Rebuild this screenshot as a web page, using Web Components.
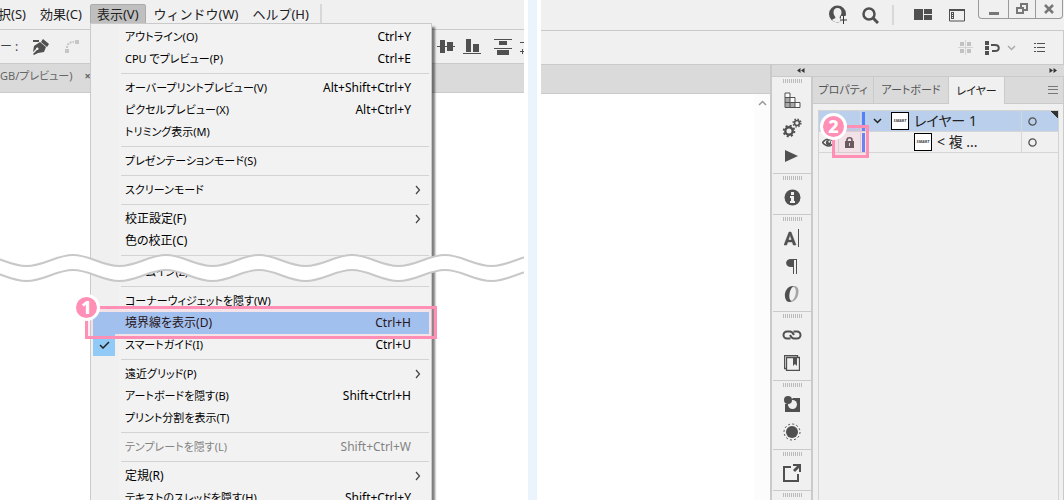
<!DOCTYPE html>
<html lang="ja">
<head>
<meta charset="utf-8">
<meta name="viewport" content="width=device-width, initial-scale=1">
<title>表示メニューとレイヤーパネル</title>
<style>
  body {
    margin: 0;
    background: #fff;
    color: #111;
    font: 12px/22px "Noto Sans", "Noto Sans CJK JP", sans-serif;
    --bar: #f0f0f0;
    --strip: #dadada;
    --line: #cacaca;
    --ink: #505050;
    --pink: #ff8fb5;
    --ui: "Noto Sans", "Noto Sans CJK JP", sans-serif;
  }
</style>
</head>
<body>
<tutorial-figure>
  <menu-pane slot="before"></menu-pane>
  <layer-pane slot="after"></layer-pane>
</tutorial-figure>

<script>
const ICONS = {
  pen: [16, 18, '<path d="M0 2h6v2H0z" fill="#505050"/><path d="M10 1l6 5-2 3-6-5z" fill="#505050"/><path d="M7 4l6 5-2 5-6 1-4 2-1-1 4-4a1.300 1.300 0 1 0-1-1L0 14l1-6z" fill="#505050"/>'],
  curve: [15, 15, '<path d="M0 10h4v4H0zM10 1h4v4h-4z" fill="#c6c6c6"/><path d="M2 9C2 5 5 3 9 3" fill="none" stroke="#c6c6c6" stroke-width="2" stroke-dasharray="2 1"/>'],
  alignMiddle: [18, 16, '<path d="M0 7h18v1H0zM3 1h5v13H3zM10 3h6v9h-6z" fill="#505050"/>'],
  alignBottom: [18, 16, '<path d="M0 14h18v1H0zM3 0h5v13H3zM10 5h6v8h-6z" fill="#505050"/>'],
  distribute: [18, 16, '<path d="M0 0h18v1H0zM5 2h8v4H5zM0 9h18v1H0zM3 11h12v5H3z" fill="#505050"/>'],
  distributeCut: [4, 16, '<path d="M0 3h4v1H0zM0 12h4v1H0zM2 10h1v5H2z" fill="#505050"/>'],
  user: [19, 20, '<circle cx="8.500" cy="9" r="8.500" fill="#505050"/><path d="M8.500 3c2.500 0 4 1.700 4 4.300 0 2-1 3.600-1.800 4.700v1.200c1.200.4 2.600.8 3.300 1.800-3 3-8 3-11 0 .7-1 2.100-1.400 3.300-1.800V12C5.500 10.900 4.500 9.300 4.500 7.300 4.500 4.700 6 3 8.500 3z" fill="#f0f0f0"/><path d="M12 11h7v9h-7z" fill="#f0f0f0"/><path d="M14 11h1v8h-1zM11 14.500h7v1h-7z" fill="#333"/>'],
  search: [17, 17, '<circle cx="7" cy="7" r="5.500" fill="none" stroke="#505050" stroke-width="2.500"/><path d="M11 11l5 5" stroke="#505050" stroke-width="3"/>'],
  workspace: [18, 12, '<path d="M0 0h9v11H0zM10 0h8v5h-8zM10 6h8v5h-8z" fill="#505050"/>'],
  window: [16, 13, '<path d="M1 0.500h14q.5 0 .5.500v11H.5V1q0-.5.500-.5z" fill="none" stroke="#505050"/><path d="M0 0h16v2H0zM2 3h3v7H2z" fill="#505050"/><path d="M3 4h1v1H3zM3 6h1v1H3zM3 8h1v1H3z" fill="#f0f0f0"/>'],
  minimize: [10, 12, '<path d="M0 9h10v3H0z" fill="#777"/>'],
  restore: [12, 12, '<path d="M5 1h6v6H5z" fill="none" stroke="#777" stroke-width="2"/><path d="M1 5h6v5H1z" fill="#f0f0f0" stroke="#777" stroke-width="2"/>'],
  close: [10, 10, '<path d="M1 1l8 8M9 1L1 9" stroke="#777" stroke-width="2.500"/>'],
  pixelGrid: [15, 15, '<path d="M2 2h4v4H2zM9 2h4v4H9zM2 9h4v4H2zM9 9h4v4H9z" fill="#c2c2c2"/><path d="M0 7h15v1H0zM7 0h1v15H7z" fill="#d4d4d4"/>'],
  snap: [15, 14, '<path d="M0 0h4v4H0zM0 5h4v4H0zM0 10h4v4H0z" fill="#505050"/><path d="M6 4h4c5 0 5 6 0 6H7" fill="none" stroke="#505050" stroke-width="2"/><path d="M6 3h2v2H6z" fill="#505050"/>'],
  chevron: [9, 6, '<path d="M1 1l3.500 3.500L8 1" fill="none" stroke="currentColor" stroke-width="1.500"/>'],
  chevronUp: [9, 6, '<path d="M1 5l3.500-3.500L8 5" fill="none" stroke="#999" stroke-width="1.500"/>'],
  chevronRight: [6, 10, '<path d="M1 1l3.500 4L1 9" fill="none" stroke="#444" stroke-width="1.200"/>'],
  list: [11, 9, '<path d="M0 0h2v1H0zM0 4h2v1H0zM0 8h2v1H0zM3 0h8v1H3zM3 4h8v1H3zM3 8h8v1H3z" fill="#505050"/>'],
  menu: [10, 8, '<path d="M0 0h10v1H0zM0 3h10v1H0zM0 7h10v1H0z" fill="#777"/>'],
  collapseLeft: [8, 5, '<path d="M3.500 0v5L0 2.500zM7.500 0v5L4 2.500z" fill="#333"/>'],
  collapseRight: [8, 5, '<path d="M.5 0v5L4 2.500zM4.500 0v5L8 2.500z" fill="#333"/>'],
  check: [11, 8, '<path d="M1 4l3 3 6-6" fill="none" stroke="#222" stroke-width="1.500"/>'],
  swatchSteps: [17, 17, '<path d="M1 5.500h5v5H1zM1 10.500h5v5H1zM6 10.500h5v5H6z" fill="#a8a8a8"/><path d="M1 1h5v4.500H1zM6 5.500h5v5H6zM11 10.500h5v5h-5z" fill="#fafafa"/><path d="M1 1h5v4.500h5v5h5v5H1zM1 5.500h5v10M1 10.500h10v5" fill="none" stroke="#505050"/>'],
  gears: [20, 20, '<circle cx="7" cy="13" r="3.700" fill="none" stroke="#505050" stroke-width="2.400"/><circle cx="7" cy="13" r="5.400" fill="none" stroke="#505050" stroke-width="1.800" stroke-dasharray="2.100 2.140"/><circle cx="15" cy="5" r="2.500" fill="none" stroke="#505050" stroke-width="1.600"/><circle cx="15" cy="5" r="3.900" fill="none" stroke="#505050" stroke-width="1.400" stroke-dasharray="1.500 1.560"/>'],
  play: [14, 14, '<path d="M0 1l13 6-13 6z" fill="#505050"/>'],
  info: [17, 17, '<circle cx="8.500" cy="8.500" r="8" fill="#505050"/><path d="M7 3h3v3H7zM6 7h4v5h1v2H6v-2h1V9H6z" fill="#f0f0f0"/>'],
  character: [16, 18, '<path d="M0 16L5 3h2l5 13H9.300l-1-3H3.700l-1 3zM4.300 11h3.400L6 6z" fill="#505050" stroke="#505050" stroke-width=".5" fill-rule="evenodd"/><path d="M14 0h1v18h-1z" fill="#505050"/>'],
  paragraph: [12, 15, '<path d="M5 0h6v15h-1V1H8v14H7V8H5C-1.500 8-1.500 0 5 0z" fill="#505050"/>'],
  opentype: [16, 18, '<path d="M9 1C2 1-1 10 2 15c1 2 3 2 5 2l1-1c-5 0-2-14 1-14z" fill="#505050"/><path d="M9 1c6-1 6 5 5 9s-4 7-8 7l1-1c5-1 7-14 2-14z" fill="#a4a4a4"/>'],
  link: [20, 10, '<path d="M8.500 8.500H5a3.500 3.500 0 0 1 0-7h3c2 0 3 1.500 4 3.500M11.500 1.500H15a3.500 3.500 0 0 1 0 7h-3c-2 0-3-1.500-4-3.500" fill="none" stroke="#505050" stroke-width="2"/>'],
  library: [16, 16, '<path d="M2.500 13.500h-2V.5h13v2M2.500 2.500h13v13h-13z" fill="none" stroke="#505050" stroke-width="1.300"/><path d="M9 3h4v8l-2-2-2 2z" fill="#505050"/>'],
  appearance: [17, 17, '<path d="M1 8h4V6l4-4h7v14H1z" fill="#505050"/><circle cx="8.500" cy="8.500" r="4.500" fill="#f0f0f0"/><circle cx="4" cy="4" r="4" fill="#505050"/>'],
  graphicStyle: [18, 18, '<circle cx="9" cy="9" r="6" fill="#505050"/><circle cx="9" cy="9" r="8" fill="none" stroke="#505050" stroke-dasharray="2 2.190"/>'],
  export: [18, 18, '<path d="M8 3H1v14h14v-7" fill="none" stroke="#505050" stroke-width="2"/><path d="M10 0h8v8h-2V4l-4 4-2-2 4-4h-4z" fill="#505050"/>'],
  eye: [13, 9, '<path d="M.5 4.500Q6.500-2.500 12.500 4.500 6.500 11.500.5 4.500z" fill="none" stroke="#505050" stroke-width="1.300"/><circle cx="6.500" cy="4.500" r="2.600" fill="#505050"/><circle cx="7.300" cy="3.700" r="1" fill="#eee"/>'],
  lock: [9, 11, '<path d="M0 4h9v7H0z" fill="#505050"/><path d="M2 5V3q0-2.200 2.500-2.200T7 3v2" fill="none" stroke="#505050" stroke-width="1.600"/><path d="M4 6h1v3H4z" fill="#ddd"/>'],
  target: [9, 9, '<circle cx="4.500" cy="4.500" r="3.600" fill="none" stroke="#505050" stroke-width="1.300"/>']
};

const RESET = `
  * { box-sizing: border-box; }
  :host { display: block; box-sizing: border-box; }
  button { margin: 0; padding: 0; border: 0; background: none; font: inherit; color: inherit; text-align: left; }
`;

function define(name, css, html) {
  customElements.define(name, class extends HTMLElement {
    connectedCallback() {
      if (this.shadowRoot) return;
      const root = this.attachShadow({ mode: 'open' });
      const template = document.createElement('template');
      template.innerHTML = `<style>${RESET}${css}</style>${typeof html === 'function' ? html(this) : html}`;
      root.append(template.content.cloneNode(true));
    }
  });
}

define('ui-icon', `
  :host { display: inline-flex; flex: none; }
  svg { display: block; }
`, el => {
  const [w, h, body] = ICONS[el.getAttribute('name')];
  return `<svg width="${w}" height="${h}" viewBox="0 0 ${w} ${h}" aria-hidden="true">${body}</svg>`;
});

define('tutorial-figure', `
  :host { display: grid; grid-template-columns: minmax(0, 524fr) 17px minmax(0, 523fr); height: 100vh; overflow: hidden; }
  .divider { margin: 0 4px; background: #ebf4fd; }
  ::slotted(*) { min-width: 0; }
`, `<slot name="before"></slot><div class="divider"></div><slot name="after"></slot>`);

define('step-mark', `
  :host { position: absolute; z-index: 3; border: 3px solid var(--pink); background: rgba(255, 143, 181, .15); pointer-events: none; }
  span { position: absolute; left: -15px; top: -15px; width: 27px; height: 27px; border: 3px solid #fff; border-radius: 50%;
    background: var(--pink); color: #fff; font: 800 18px/20px "Noto Sans", sans-serif; text-align: center; }
`, `<span><slot></slot></span>`);

/* ---------- left: menu ---------- */

define('menu-row', `
  button { display: grid; grid-template-columns: 22px 1fr auto; width: 100%; height: 22px; align-items: center; white-space: nowrap; }
  .check { display: flex; align-items: center; justify-content: center; height: 22px; }
  :host([checked]) .check { background: #91c9f7; }
  :host([active]) button { background: #91c9f7; }
  :host([disabled]) button { color: #838383; }
  .label { padding-left: 10px; font-feature-settings: "palt"; }
  :host([kana]) .label { font-size: 11px; }
  .keys { padding-right: 18px; }
  .more { display: flex; padding-right: 8px; }
`, el => `<button role="menuitem" ${el.hasAttribute('disabled') ? 'disabled' : ''}>
  <span class="check">${el.hasAttribute('checked') ? '<ui-icon name="check"></ui-icon>' : ''}</span>
  <span class="label"><slot></slot></span>
  ${el.hasAttribute('submenu') ? '<span class="more"><ui-icon name="chevronRight"></ui-icon></span>' : `<span class="keys">${el.getAttribute('keys') || ''}</span>`}
</button>`);

define('menu-line', `
  :host { height: 7px; padding: 3px 0 0 28px; }
  div { height: 1px; background: #d3d3d3; }
`, `<div></div>`);

define('view-menu', `
  :host { width: 342px; padding: 2px; border: 1px solid var(--line);
    background: linear-gradient(90deg, #f0f0f0 28px, #f2f2f2 28px); box-shadow: 3px 4px 2px rgba(0, 0, 0, .5); color: #000; }
  .gap { height: 2px; }
`, `
  <menu-row kana keys="Ctrl+Y">アウトライン(O)</menu-row>
  <menu-row kana keys="Ctrl+E">CPU でプレビュー(P)</menu-row>
  <menu-line></menu-line>
  <menu-row kana keys="Alt+Shift+Ctrl+Y">オーバープリントプレビュー(V)</menu-row>
  <menu-row kana keys="Alt+Ctrl+Y">ピクセルプレビュー(X)</menu-row>
  <menu-row kana>トリミング表示(M)</menu-row>
  <menu-line></menu-line>
  <menu-row kana>プレゼンテーションモード(S)</menu-row>
  <menu-line></menu-line>
  <menu-row kana submenu>スクリーンモード</menu-row>
  <menu-line></menu-line>
  <menu-row submenu>校正設定(F)</menu-row>
  <menu-row>色の校正(C)</menu-row>
  <menu-line></menu-line>
  <div class="gap"></div>
  <menu-row kana>ズームイン(Z)</menu-row>
  <menu-line></menu-line>
  <menu-row kana>コーナーウィジェットを隠す(W)</menu-row>
  <menu-row active keys="Ctrl+H">境界線を表示(D)</menu-row>
  <menu-row kana checked keys="Ctrl+U">スマートガイド(I)</menu-row>
  <menu-line></menu-line>
  <menu-row kana submenu>遠近グリッド(P)</menu-row>
  <menu-row kana keys="Shift+Ctrl+H">アートボードを隠す(B)</menu-row>
  <menu-row kana>プリント分割を表示(T)</menu-row>
  <menu-line></menu-line>
  <menu-row kana disabled keys="Shift+Ctrl+W">テンプレートを隠す(L)</menu-row>
  <menu-line></menu-line>
  <menu-row submenu>定規(R)</menu-row>
  <menu-row kana keys="Shift+Ctrl+Y">テキストのスレッドを隠す(H)</menu-row>
`);

define('wave-cut', `
  :host { position: absolute; left: 0; right: 0; top: 253px; height: 30px; z-index: 2; }
  svg { display: block; width: 100%; height: 30px; }
`, `<svg aria-hidden="true"><defs>
  <pattern id="w" width="93" height="30" patternUnits="userSpaceOnUse" patternTransform="translate(-20 0)">
    <path d="M0 2C17 2 29 13 46.500 13S76 2 93 2V17C76 17 64 28 46.500 28S17 17 0 17z" fill="#fff"/>
    <path d="M-2 2H0C17 2 29 13 46.500 13S76 2 93 2h2M-2 17H0C17 17 29 28 46.500 28S76 17 93 17h2" fill="none" stroke="#c8c8c8" stroke-width="2"/>
  </pattern></defs><rect width="100%" height="30" fill="url(#w)"/></svg>`);

define('menu-pane', `
  :host { position: relative; overflow: hidden; background: #fff; }
  nav { display: flex; height: 30px; padding-top: 4px; border-bottom: 1px solid var(--line); background: var(--bar);
    font-size: 13px; line-height: 16px; color: #222; white-space: nowrap; }
  nav button { height: 20px; padding: 0 7px; }
  nav button:first-child { margin-left: -9px; }
  nav button.open { margin: 0 1px; border: 1px solid #ababab; border-radius: 2px 2px 0 0; padding: 0 6px; background: #bfbfbf; }
  nav i { width: 2px; height: 20px; margin-left: 4px; background: #d8d8d8; }
  .tools { display: flex; align-items: center; height: 34px; border-bottom: 1px solid var(--line); background: var(--bar); }
  .tools b { width: 33px; font-weight: 400; color: #444; white-space: nowrap; }
  .tools button { display: flex; margin-right: 16px; }
  .tools button.push { margin-left: auto; }
  .tools button.near { margin-right: 8px; }
  .tools button.mid { margin-right: 13px; }
  .tools button.last { margin: 0; }
  .tabs { display: flex; align-items: center; gap: 12px; height: 29px; padding-bottom: 4px; border-bottom: 1px solid var(--line); background: var(--strip);
    color: #666; font-size: 11px; font-feature-settings: "palt"; }
  view-menu { position: absolute; left: 90px; top: 23px; z-index: 1; }
  .one { left: 85px; top: 306px; width: 352px; height: 33px; }
`, `
  <nav><button>択(S)</button><button>効果(C)</button><button class="open">表示(V)</button><button>ウィンドウ(W)</button><button>ヘルプ(H)</button><i></i></nav>
  <div class="tools"><b>ー :</b>
    <button aria-label="ペン"><ui-icon name="pen"></ui-icon></button>
    <button aria-label="曲線"><ui-icon name="curve"></ui-icon></button>
    <button class="push near" aria-label="垂直方向中央に整列"><ui-icon name="alignMiddle"></ui-icon></button>
    <button class="mid" aria-label="下に整列"><ui-icon name="alignBottom"></ui-icon></button>
    <button class="near" aria-label="上端を分布"><ui-icon name="distribute"></ui-icon></button>
    <button class="last" aria-label="下端を分布"><ui-icon name="distributeCut"></ui-icon></button>
  </div>
  <div class="tabs"><span>GB/プレビュー)</span><button aria-label="閉じる"><b>×</b></button></div>
  <view-menu></view-menu>
  <wave-cut></wave-cut>
  <step-mark class="one">1</step-mark>
`);

/* ---------- right: window with dock ---------- */

define('window-controls', `
  :host { display: flex; align-self: flex-start; height: 19px; border: 1px solid #999; border-top: 0; border-radius: 0 0 4px 4px; }
  button { display: flex; justify-content: center; align-items: center; width: 29px; }
  button + button { width: 27px; border-left: 1px solid #999; }
`, `<button aria-label="最小化"><ui-icon name="minimize"></ui-icon></button><button aria-label="元に戻す"><ui-icon name="restore"></ui-icon></button><button aria-label="閉じる"><ui-icon name="close"></ui-icon></button>`);

define('dock-group', `
  :host { padding: 2px 0 3px; border-bottom: 1px solid var(--line); }
  .grip { width: 19px; height: 4px; margin: 0 auto 3px; background: repeating-linear-gradient(90deg, #bbb 0 1px, transparent 1px 2px); }
  button { display: flex; align-items: center; justify-content: center; width: 100%; height: 28px; }
`, el => `<div class="grip"></div>${(el.getAttribute('icons') || '').split(' ').filter(Boolean).map(n => `<button aria-label="${n}"><ui-icon name="${n}"></ui-icon></button>`).join('')}`);

define('layer-row', `
  :host { display: grid; grid-template-columns: 20px 22px 4px 1fr 37px; height: 21px; border-bottom: 1px solid #d6d6d6; align-items: stretch; }
  :host([selected]) { background: linear-gradient(225deg, #333 5px, transparent 5px), #b9cfeb; }
  button { display: flex; align-items: center; justify-content: center; border-right: 1px solid #d6d6d6; }
  .bar { margin: 1px 0 0 1px; background: #557ffb; }
  .name { display: flex; align-items: center; padding-left: 8px; gap: 9px; font-size: 14px; line-height: 20px; white-space: nowrap; color: #222; font-feature-settings: "palt"; }
  .item { padding-left: 49px; }
  .name > span { display: flex; align-items: center; gap: 5px; }
  .thumb { display: flex; align-items: center; justify-content: center; width: 18px; height: 18px; border: 1px solid #000; background: #fff; color: #444; font: italic 700 4px/6px var(--ui); }
  .target { border-right: 0; border-left: 1px solid #d6d6d6; padding-right: 16px; }
`, el => {
  const item = el.hasAttribute('item');
  return `<button aria-label="表示">${item ? '<ui-icon name="eye"></ui-icon>' : ''}</button>
  <button aria-label="ロック">${item ? '<ui-icon name="lock"></ui-icon>' : ''}</button>
  <div class="bar"></div>
  <div class="name ${item ? 'item' : ''}">${item ? '' : '<ui-icon name="chevron"></ui-icon>'}<span><span class="thumb">SMART</span><slot></slot></span></div>
  <button class="target" aria-label="ターゲット"><ui-icon name="target"></ui-icon></button>`;
});

define('layers-panel', `
  :host { display: flex; flex-direction: column; min-width: 0; border-left: 2px solid var(--line); border-right: 1px solid var(--line); background: var(--bar); }
  .tabs { display: flex; height: 27px; background: var(--strip); color: #555; white-space: nowrap; font-size: 11px; line-height: 24px; font-feature-settings: "palt"; }
  .tabs button { flex: none; border-right: 1px solid var(--line); border-bottom: 1px solid var(--line); text-align: center; }
  .tabs .a { width: 61px; } .tabs .b { width: 75px; }
  .tabs .on { width: 56px; background: var(--bar); border-bottom: 0; color: #222; }
  .tabs .opt { display: flex; flex: 1; align-items: center; justify-content: flex-end; padding: 0 5px; border-right: 0; }
  .list { flex: 1; margin: 6px 4px 0 5px; border: 1px solid #d3d3d3; border-bottom: 0; }
`, `
  <div class="tabs"><button class="a">プロパティ</button><button class="b">アートボード</button><button class="on">レイヤー</button><button class="opt" aria-label="パネルメニュー"><ui-icon name="menu"></ui-icon></button></div>
  <div class="list"><layer-row selected>レイヤー 1</layer-row><layer-row item>&lt; 複 ...</layer-row></div>
`);

define('layer-pane', `
  :host { position: relative; display: flex; flex-direction: column; background: #fff; overflow: hidden; }
  .top { display: flex; align-items: center; justify-content: flex-end; height: 31px; padding-right: 1px; border-bottom: 1px solid var(--line); background: var(--bar); flex: none; }
  .top button, .ctl button { display: flex; }
  .top .user { margin-right: 14px; } .top .search { margin-right: 13px; }
  .top i { width: 2px; height: 20px; margin-right: 20px; background: #d8d8d8; }
  .top .ws { margin-right: 17px; } .top .win { margin-right: 13px; }
  .ctl { display: flex; align-items: center; justify-content: flex-end; height: 34px; padding-right: 18px; border-bottom: 1px solid var(--line); border-right: 1px solid var(--line); background: var(--bar); flex: none; }
  .ctl .grid { margin-right: 12px; } .ctl .snap { margin-right: 7px; } .ctl .drop { margin-right: 18px; color: #aaa; }
  .body { display: grid; grid-template-columns: minmax(0, 1fr) 294px; flex: 1; min-height: 0; }
  .doc { display: flex; flex-direction: column; }
  .strip { height: 29px; border-bottom: 1px solid var(--line); background: var(--strip); }
  .scroll { flex: 1; align-self: flex-end; width: 16px; padding: 6px 4px; background: #fcfcfc; line-height: 0; }
  .dock { display: flex; flex-direction: column; border-left: 2px solid var(--line); }
  .head { display: flex; justify-content: space-between; align-items: center; height: 12px; padding: 0 7px 0 25px; border-bottom: 1px solid var(--line); background: var(--strip); flex: none; }
  .cols { display: grid; grid-template-columns: 39px minmax(0, 1fr); flex: 1; }
  .icons { padding-left: 1px; background: var(--bar); }
  .two { left: 291px; top: 125px; width: 37px; height: 33px; }
`, `
  <div class="top">
    <button class="user" aria-label="ユーザー"><ui-icon name="user"></ui-icon></button>
    <button class="search" aria-label="検索"><ui-icon name="search"></ui-icon></button><i></i>
    <button class="ws" aria-label="ワークスペース"><ui-icon name="workspace"></ui-icon></button>
    <button class="win" aria-label="ドキュメント"><ui-icon name="window"></ui-icon></button>
    <window-controls></window-controls>
  </div>
  <div class="ctl">
    <button class="grid" aria-label="ピクセルグリッド"><ui-icon name="pixelGrid"></ui-icon></button>
    <button class="snap" aria-label="スナップ"><ui-icon name="snap"></ui-icon></button>
    <button class="drop" aria-label="オプション"><ui-icon name="chevron"></ui-icon></button>
    <button aria-label="リスト"><ui-icon name="list"></ui-icon></button>
  </div>
  <div class="body">
    <div class="doc"><div class="strip"></div><div class="scroll"><ui-icon name="chevronUp"></ui-icon></div></div>
    <div class="dock">
      <div class="head"><ui-icon name="collapseLeft"></ui-icon><ui-icon name="collapseRight"></ui-icon></div>
      <div class="cols">
        <div class="icons">
          <dock-group icons="swatchSteps gears play"></dock-group>
          <dock-group icons="info"></dock-group>
          <dock-group icons="character paragraph opentype"></dock-group>
          <dock-group icons="link library"></dock-group>
          <dock-group icons="appearance graphicStyle"></dock-group>
          <dock-group icons="export"></dock-group>
          <dock-group></dock-group>
        </div>
        <layers-panel></layers-panel>
      </div>
    </div>
  </div>
  <step-mark class="two">2</step-mark>
`);
</script>
</body>
</html>
